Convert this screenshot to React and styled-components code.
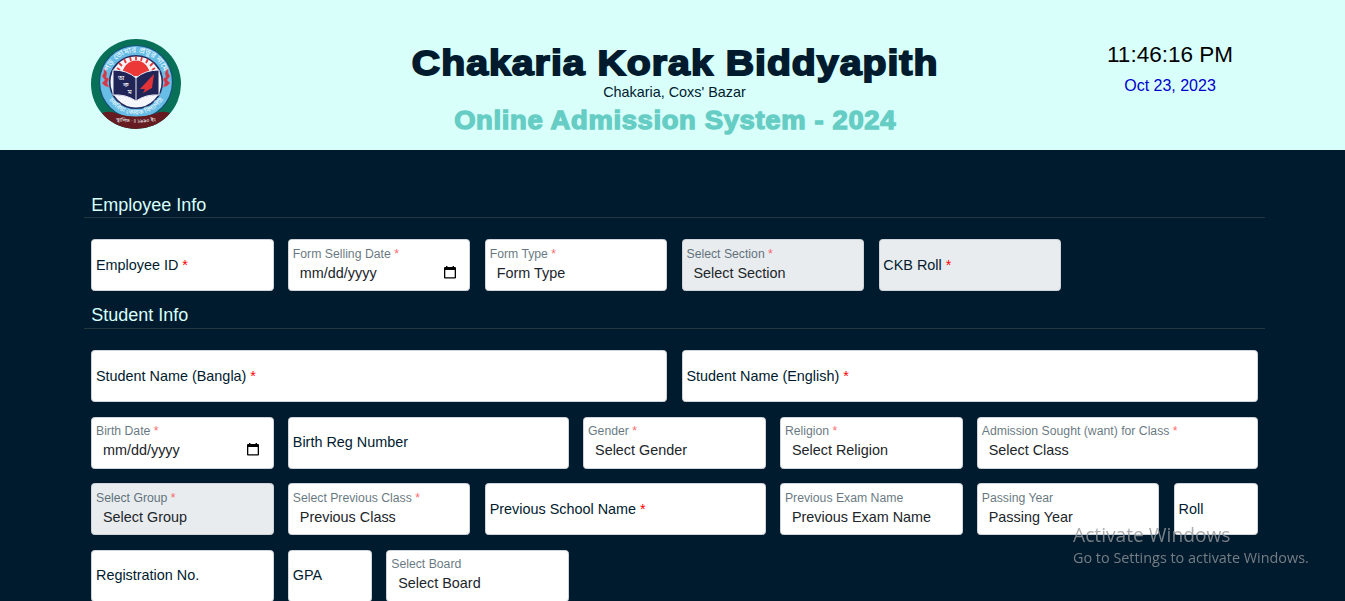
import React from "react";
import styled, { createGlobalStyle } from "styled-components";

const GlobalStyle = createGlobalStyle`
  *, *::before, *::after { box-sizing: border-box; }
  html, body { margin: 0; height: 100%; overflow: hidden; }
  body {
    background: #001b2e;
    font-family: "Liberation Sans", Arial, sans-serif;
    font-size: 14.4px;
    line-height: 1.5;
    color: #212529;
  }
`;

const Page = styled.div`
  height: 601px;
  overflow: hidden;
  background: #001b2e;
`;

const Header = styled.header`
  display: grid;
  grid-template-columns: 196px 1fr 196px;
  height: 150px;
  padding: 0 77px 0 91px;
  background: #d9fffb;
`;

const LogoBox = styled.div`
  padding-top: 39px;
  svg { display: block; }
`;

const Titles = styled.div`
  display: flex;
  flex-direction: column;
  align-items: center;
  white-space: nowrap;
  padding-top: 43px;
  margin-left: -10px;
`;

const School = styled.h1`
  margin: 0 -1.5px 0 0;
  font-size: 35.2px;
  line-height: 40px;
  font-weight: 700;
  letter-spacing: 0.9px;
  color: #001b2e;
  transform: scaleX(1.115);
  -webkit-text-stroke: 1.8px #001b2e;
`;

const Address = styled.div`
  font-size: 14.4px;
  line-height: 18px;
  color: #001b2e;
`;

const System = styled.h2`
  margin: 1px -1px 0 0;
  font-size: 25.2px;
  line-height: 36px;
  font-weight: 700;
  letter-spacing: 0.6px;
  color: #66cdc4;
  transform: scaleX(1.088);
  -webkit-text-stroke: 1.3px #66cdc4;
`;

const Clock = styled.div`
  padding-top: 41px;
  text-align: center;
  white-space: nowrap;
`;

const Time = styled.div`
  font-size: 22.5px;
  line-height: 28px;
  color: #000;
`;

const Day = styled.div`
  margin-top: 5px;
  font-size: 16px;
  line-height: 24px;
  color: #0000cd;
`;

const Main = styled.main`
  width: 1181px;
  margin-left: 84px;
  padding-top: 40px;
`;

const Section = styled.section`
  height: 110.8px;
`;

const Heading = styled.h3`
  margin: 0 0 21.6px;
  height: 27.8px;
  padding: 1.6px 7.2px 0;
  border-bottom: 1px solid #26363f;
  font-size: 18px;
  font-weight: 400;
  line-height: 27px;
  color: #d9fffb;
`;

const Fields = styled.div`
  display: grid;
  grid-template-columns: repeat(12, minmax(0, 1fr));
  gap: 14.4px;
  padding: 0 7.2px;
`;

const Box = styled.div`
  grid-column: span ${(p) => p.$span};
  display: flex;
  flex-direction: column;
  justify-content: ${(p) => (p.$floating ? "flex-start" : "center")};
  height: 52.1px;
  padding: ${(p) => (p.$floating ? "4.7px 3.8px 0" : "0 3.8px 0.5px")};
  border: 1px solid #ced4da;
  border-radius: 3.6px;
  background: ${(p) => (p.$disabled ? "#e9ecef" : "#fff")};
  white-space: nowrap;
`;

const Label = styled.label`
  font-size: 14.4px;
  line-height: 20px;
  color: #001b2e;
`;

const SmallLabel = styled.label`
  font-size: 12.24px;
  line-height: 18px;
  color: #001b2e;
  opacity: 0.6;
`;

const Star = styled.span`
  color: #f00;
`;

const Value = styled.div`
  display: flex;
  align-items: center;
  justify-content: space-between;
  height: 20px;
  padding: 0 10px 0 7px;
  font-size: 14.4px;
  line-height: 20px;

  svg {
    margin-top: -2px;
  }
`;

const Watermark = styled.div`
  position: fixed;
  left: 1073px;
  top: 521px;
  font-family: "Open Sans", "Noto Sans", sans-serif;
  color: rgba(150, 153, 156, 0.78);
  white-space: nowrap;
`;

const WatermarkTitle = styled.div`
  font-size: 19.2px;
  line-height: 28px;
`;

const WatermarkText = styled.div`
  font-size: 14.4px;
  line-height: 18px;
`;

function Calendar() {
  return (
    <svg width="12" height="13" viewBox="0 0 12 13">
      <path
        fill="#000"
        fillRule="evenodd"
        d="M2 0h1.4v1h5.2V0H10v1h1a1 1 0 0 1 1 1v9.5a1 1 0 0 1-1 1H1a1 1 0 0 1-1-1V2a1 1 0 0 1 1-1h1zM1.3 4v7.3h9.4V4z"
      />
    </svg>
  );
}

function Crest() {
  return (
    <svg width="90" height="90" viewBox="0 0 90 90">
      <defs>
        <clipPath id="disc"><circle cx="45" cy="45" r="45" /></clipPath>
        <path id="arcTop" d="M15.500 43a29.500 29.500 0 0 1 59 0" />
        <path id="arcBottom" d="M12.500 43a32.500 32.500 0 0 0 65 0" />
        <path id="arcBase" d="M22 82Q45 85 68 82" />
      </defs>
      <circle cx="45" cy="45" r="45" fill="#087057" />
      <circle cx="45" cy="43" r="36.500" fill="#67bde5" stroke="#174f75" strokeWidth="1.2" />
      <g clipPath="url(#disc)">
        <path d="M11 74Q19 71 27 75Q45 80 63 75Q71 71 79 74L70 86Q45 94 20 86z" fill="#651b20" />
      </g>
      <circle cx="45" cy="43" r="26.300" fill="#f4f6fb" stroke="#242d62" strokeWidth="1.6" />
      <path d="M31 37a14 15.500 0 0 1 28 0z" fill="#ed3838" />
      <path
        d="M29 31l-3-2M31 27l-3-3M35 24l-2-4M40 22l-1-4M45 21v-4M50 22l1-4M55 24l2-4M59 27l3-3M61 31l3-2"
        stroke="#ed3838"
        strokeWidth="1.8"
      />
      <path d="M22 31Q36 31 45 39Q54 31 68 31V56Q55 55 45 62Q35 55 22 56z" fill="#202456" stroke="#e8ebf5" strokeWidth="1" />
      <path d="M45 39v23" stroke="#e8ebf5" strokeWidth="1" />
      <path d="M63 35L49 50l5 0-2 4 7-4 2-1z" fill="#e33338" />
      <g fill="#fff" fontSize="7" fontFamily="Noto Sans Bengali, Noto Sans, sans-serif">
        <text x="27" y="41">অ</text>
        <text x="32" y="48">ক</text>
        <text x="36.500" y="54.500">ম</text>
      </g>
      <g fill="#c93a4b" stroke="#eb6570" strokeWidth=".5">
        <path d="M13 29l3 5-1 4 3 2-2 4 2 4-4-1-3-3 3-3-3-4 2-3z" />
        <path d="M77 29l-3 5 1 4-3 2 2 4-2 4 4-1 3-3-3-3 3-4-2-3z" />
      </g>
      <g fill="#f3fbff" fontFamily="Noto Sans Bengali, Noto Sans, sans-serif" textAnchor="middle">
        <text fontSize="8"><textPath href="#arcTop" startOffset="50%">পড় তোমার প্রভুর নামে</textPath></text>
        <text fontSize="6.500"><textPath href="#arcBottom" startOffset="50%">চকরিয়া কোরক বিদ্যাপীঠ</textPath></text>
        <text fontSize="5.200"><textPath href="#arcBase" startOffset="50%">স্থাপিত ঃ ১৯৯০ ইং</textPath></text>
      </g>
    </svg>
  );
}

function Field({ span, label, value, required, disabled, date }) {
  const Caption = value ? SmallLabel : Label;
  return (
    <Box $span={span} $floating={!!value} $disabled={disabled}>
      <Caption>
        {label}
        {required && <Star> *</Star>}
      </Caption>
      {value && (
        <Value>
          {value}
          {date && <Calendar />}
        </Value>
      )}
    </Box>
  );
}

const employeeFields = [
  { span: 2, label: "Employee ID", required: true },
  { span: 2, label: "Form Selling Date", value: "mm/dd/yyyy", required: true, date: true },
  { span: 2, label: "Form Type", value: "Form Type", required: true },
  { span: 2, label: "Select Section", value: "Select Section", required: true, disabled: true },
  { span: 2, label: "CKB Roll", required: true, disabled: true },
];

const studentFields = [
  { span: 6, label: "Student Name (Bangla)", required: true },
  { span: 6, label: "Student Name (English)", required: true },
  { span: 2, label: "Birth Date", value: "mm/dd/yyyy", required: true, date: true },
  { span: 3, label: "Birth Reg Number" },
  { span: 2, label: "Gender", value: "Select Gender", required: true },
  { span: 2, label: "Religion", value: "Select Religion", required: true },
  { span: 3, label: "Admission Sought (want) for Class", value: "Select Class", required: true },
  { span: 2, label: "Select Group", value: "Select Group", required: true, disabled: true },
  { span: 2, label: "Select Previous Class", value: "Previous Class", required: true },
  { span: 3, label: "Previous School Name", required: true },
  { span: 2, label: "Previous Exam Name", value: "Previous Exam Name" },
  { span: 2, label: "Passing Year", value: "Passing Year" },
  { span: 1, label: "Roll" },
  { span: 2, label: "Registration No." },
  { span: 1, label: "GPA" },
  { span: 2, label: "Select Board", value: "Select Board" },
];

export default function App() {
  return (
    <Page>
      <GlobalStyle />
      <Header>
        <LogoBox><Crest /></LogoBox>
        <Titles>
          <School>Chakaria Korak Biddyapith</School>
          <Address>Chakaria, Coxs' Bazar</Address>
          <System>Online Admission System - 2024</System>
        </Titles>
        <Clock>
          <Time>11:46:16 PM</Time>
          <Day>Oct 23, 2023</Day>
        </Clock>
      </Header>
      <Main>
        <Section>
          <Heading>Employee Info</Heading>
          <Fields>
            {employeeFields.map((f) => <Field key={f.label} {...f} />)}
          </Fields>
        </Section>
        <Section>
          <Heading>Student Info</Heading>
          <Fields>
            {studentFields.map((f) => <Field key={f.label} {...f} />)}
          </Fields>
        </Section>
      </Main>
      <Watermark>
        <WatermarkTitle>Activate Windows</WatermarkTitle>
        <WatermarkText>Go to Settings to activate Windows.</WatermarkText>
      </Watermark>
    </Page>
  );
}
